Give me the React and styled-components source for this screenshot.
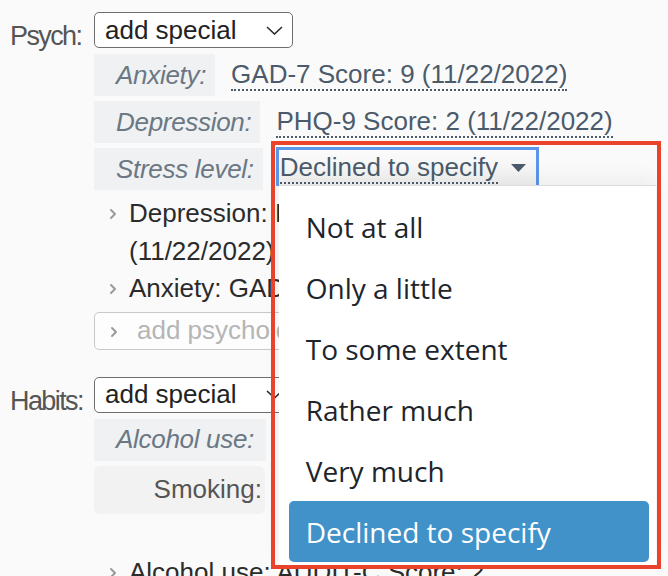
import styled, { createGlobalStyle } from "styled-components";

const GlobalStyle = createGlobalStyle`
    html, body {
        margin: 0;
        overflow: hidden;
        background: #fafafa;
    }
    body {
        font-family: "Liberation Sans", Arial, sans-serif;
        color: #2b2b2b;
    }
`;

const stressOptions = [
    "Not at all",
    "Only a little",
    "To some extent",
    "Rather much",
    "Very much",
    "Declined to specify",
];

function Chevron() {
    return (
        <ChevronIcon width="8" height="12" viewBox="0 0 8 12">
            <polyline points="2,2 6,6 2,10" fill="none" stroke="#9a9a9a" strokeWidth="2" strokeLinecap="round" strokeLinejoin="round" />
        </ChevronIcon>
    );
}

function AddSpecial() {
    return (
        <AddSelect>
            add special
            <svg width="17" height="9" viewBox="0 0 17 9">
                <polyline points="1,1 8.5,8 16,1" fill="none" stroke="#2b2b2b" strokeWidth="1.6" />
            </svg>
        </AddSelect>
    );
}

export default function App() {
    return (
        <>
            <GlobalStyle />
            <Page>
                <Section>
                    <SectionLabel>Psych:</SectionLabel>
                    <SectionBody>
                        <AddSpecial />
                        <FieldRow>
                            <FieldLabel>Anxiety:</FieldLabel>
                            <FieldValue>GAD-7 Score: 9 (11/22/2022)</FieldValue>
                        </FieldRow>
                        <FieldRow>
                            <FieldLabel>Depression:</FieldLabel>
                            <FieldValue>PHQ-9 Score: 2 (11/22/2022)</FieldValue>
                        </FieldRow>
                        <FieldRow>
                            <FieldLabel>Stress level:</FieldLabel>
                            <DropdownAnchor>
                                <Trigger>
                                    <TriggerText>Declined to specify</TriggerText>
                                    <svg width="15" height="8" viewBox="0 0 15 8">
                                        <polygon points="0,0 15,0 7.5,8" fill="#4b5b6b" />
                                    </svg>
                                </Trigger>
                                <Menu>
                                    {stressOptions.map((opt) => (
                                        <MenuItem key={opt} $selected={opt === "Declined to specify"}>
                                            {opt}
                                        </MenuItem>
                                    ))}
                                </Menu>
                                <Annotation />
                            </DropdownAnchor>
                        </FieldRow>
                        <HistoryList>
                            <HistoryItem>
                                <Chevron />
                                <span>Depression: PHQ-9 Score: 2 (11/22/2022)</span>
                            </HistoryItem>
                            <HistoryItem>
                                <Chevron />
                                <span>Anxiety: GAD-7 Score: 9 (11/22/2022)</span>
                            </HistoryItem>
                        </HistoryList>
                        <AddBox>
                            <Chevron />
                            add psychological assessment
                        </AddBox>
                    </SectionBody>
                </Section>
                <Section $spaced>
                    <SectionLabel>Habits:</SectionLabel>
                    <SectionBody>
                        <AddSpecial />
                        <FieldRow>
                            <FieldLabel $wide>Alcohol use:</FieldLabel>
                            <FieldValue>AUDIT-C Score: 2 (11/22/2022)</FieldValue>
                        </FieldRow>
                        <FieldRow>
                            <PlainLabel>Smoking:</PlainLabel>
                        </FieldRow>
                        <HistoryList $gap={35}>
                            <HistoryItem>
                                <Chevron />
                                <span>Alcohol use: AUDIT-C Score: 2 (11/22/2022)</span>
                            </HistoryItem>
                        </HistoryList>
                    </SectionBody>
                </Section>
            </Page>
        </>
    );
}

const Page = styled.div`
    padding: 12px 0 0 10px;
    font-size: 26px;
`;

const Section = styled.div`
    display: grid;
    grid-template-columns: 84px 1fr;
    margin-top: ${(p) => (p.$spaced ? "27px" : "0")};
`;

const SectionLabel = styled.div`
    font-size: 27px;
    letter-spacing: -1.6px;
    color: #555;
    padding-top: 6px;
    line-height: 36px;
`;

const SectionBody = styled.div`
    display: flex;
    flex-direction: column;
    align-items: flex-start;
`;

const AddSelect = styled.div`
    box-sizing: border-box;
    width: 199px;
    height: 36px;
    border: 1.5px solid #6e6e6e;
    border-radius: 5px;
    background: #fff;
    display: flex;
    align-items: center;
    justify-content: space-between;
    padding: 0 9px 0 10px;
    color: #222;
    margin-bottom: 6px;
`;

const FieldRow = styled.div`
    display: flex;
    align-items: center;
    margin-bottom: 5px;
`;

const FieldLabel = styled.div`
    height: 42px;
    display: flex;
    align-items: center;
    padding: 0 ${(p) => (p.$wide ? "12px" : "9px")} 0 22px;
    background: #eff1f3;
    color: #6b7884;
    font-style: italic;
    letter-spacing: -0.3px;
`;

const PlainLabel = styled.div`
    box-sizing: border-box;
    width: 171px;
    height: 48px;
    display: flex;
    align-items: center;
    justify-content: flex-end;
    padding-right: 3px;
    background: #f2f2f2;
    border-radius: 6px;
    color: #555;
`;

const FieldValue = styled.span`
    margin-left: 16px;
    line-height: 30px;
    color: #4b5b6b;
    border-bottom: 2px dotted #4b5b6b;
    white-space: nowrap;
`;

const DropdownAnchor = styled.div`
    position: relative;
    align-self: flex-start;
    margin: -1px 0 0 13px;
`;

const Trigger = styled.div`
    box-sizing: border-box;
    height: 39px;
    display: flex;
    align-items: center;
    gap: 13px;
    padding: 0 10px 0 1px;
    border: 3px solid #5b96e8;
    border-bottom: none;
    background: linear-gradient(#fbfbfb, #f0f0f0);
    color: #4b5b6b;
`;

const TriggerText = styled.span`
    line-height: 30px;
    border-bottom: 2px dotted #4b5b6b;
`;

const Menu = styled.div`
    position: absolute;
    top: 38px;
    left: 3px;
    width: 377px;
    height: 381px;
    box-sizing: border-box;
    padding: 10px 7px 0 10px;
    background: #fff;
    border-top: 1px solid #dcdcdc;
    box-shadow: 0 -8px 18px rgba(0, 0, 0, 0.05);
    z-index: 2;
    font-family: "Open Sans", "Noto Sans", sans-serif;
    font-size: 28px;
`;

const MenuItem = styled.div`
    height: 61px;
    display: flex;
    align-items: center;
    padding-left: 17px;
    border-radius: 5px;
    color: ${(p) => (p.$selected ? "#fff" : "#1d252c")};
    background: ${(p) => (p.$selected ? "#4192c9" : "transparent")};
`;

const Annotation = styled.div`
    position: absolute;
    top: -6px;
    left: -5px;
    width: 390px;
    height: 428px;
    box-sizing: border-box;
    border: 4px solid #e9432b;
    z-index: 3;
    pointer-events: none;
`;

const HistoryList = styled.div`
    width: 480px;
    margin-top: ${(p) => p.$gap ?? 0}px;
`;

const HistoryItem = styled.div`
    position: relative;
    padding-left: 35px;
    line-height: 37.5px;
    color: #2b2b2b;
`;

const ChevronIcon = styled.svg`
    position: absolute;
    left: 15px;
    top: 13px;
`;

const AddBox = styled.div`
    position: relative;
    box-sizing: border-box;
    width: 440px;
    height: 38px;
    margin-top: 4px;
    padding-left: 42px;
    display: flex;
    align-items: center;
    border: 1.5px solid #c9c9c9;
    border-radius: 5px;
    color: #b5b5b5;
    background: #fdfdfd;
`;
